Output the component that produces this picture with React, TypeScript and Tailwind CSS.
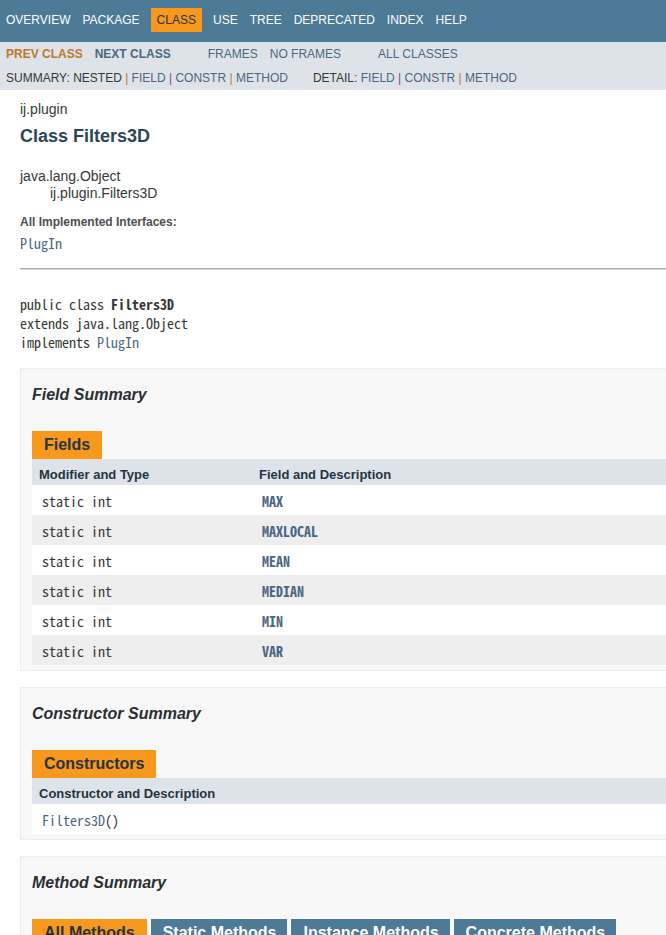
import React from "react";

const mono = "font-['Noto_Sans_Mono_CJK_KR','Liberation_Mono',monospace]";

function NavItem({ label, active }: { label: string; active?: boolean }) {
  return (
    <span
      className={
        active
          ? "px-[6px] py-[5px] mx-[5px] bg-[#F8981D] text-[#253441]"
          : "px-[6px] py-[5px]"
      }
    >
      {label}
    </span>
  );
}

function Tab({ label, active }: { label: string; active?: boolean }) {
  return (
    <div
      className={
        (active ? "bg-[#F8981D] text-[#253441] px-[12px]" : "bg-[#4D7A97] text-white pl-[12px] pr-[11px]") +
        " h-[28px] pt-[5px] text-[16px] leading-[18px] font-bold whitespace-nowrap"
      }
    >
      {label}
    </div>
  );
}

function BlockTitle({ children }: { children: React.ReactNode }) {
  return (
    <div className="h-[62px] pt-[16px] text-[16px] leading-[20px] font-bold italic text-[#2b2f33]">
      {children}
    </div>
  );
}

const fields = ["MAX", "MAXLOCAL", "MEAN", "MEDIAN", "MIN", "VAR"];

export default function App() {
  return (
    <div className="w-[666px] h-[935px] overflow-hidden bg-white text-[#353833] font-['Liberation_Sans',Arial,sans-serif]">
      {/* top nav */}
      <div className="bg-[#4D7A97] h-[42px] pt-[8px] flex items-start text-[12px] leading-[14px] text-white uppercase">
        <NavItem label="Overview" />
        <NavItem label="Package" />
        <NavItem label="Class" active />
        <NavItem label="Use" />
        <NavItem label="Tree" />
        <NavItem label="Deprecated" />
        <NavItem label="Index" />
        <NavItem label="Help" />
      </div>
      {/* sub nav */}
      <div className="bg-[#dee3e9] h-[48px] text-[12px] leading-[14px]">
        <div className="h-[23px] pt-[5px] flex uppercase">
          <span className="px-[6px] font-bold text-[#bb7a2a]">Prev Class</span>
          <span className="px-[6px] font-bold text-[#4A6782]">Next Class</span>
          <span className="ml-[25px] px-[6px] text-[#4A6782]">Frames</span>
          <span className="px-[6px] text-[#4A6782]">No Frames</span>
          <span className="ml-[25px] px-[6px] text-[#4A6782]">All Classes</span>
        </div>
        <div className="h-[25px] pt-[6px] flex whitespace-nowrap">
          <span className="px-[6px]">
            SUMMARY: NESTED <span className="text-[#bb7a2a]">|</span>{" "}
            <span className="text-[#4A6782]">FIELD</span>{" "}
            <span className="text-[#8a3f8a]">|</span>{" "}
            <span className="text-[#4A6782]">CONSTR</span>{" "}
            <span className="text-[#bb7a2a]">|</span>{" "}
            <span className="text-[#4A6782]">METHOD</span>
          </span>
          <span className="ml-[13px] px-[6px]">
            DETAIL: <span className="text-[#4A6782]">FIELD</span>{" "}
            <span className="text-[#8a3f8a]">|</span>{" "}
            <span className="text-[#4A6782]">CONSTR</span>{" "}
            <span className="text-[#bb7a2a]">|</span>{" "}
            <span className="text-[#4A6782]">METHOD</span>
          </span>
        </div>
      </div>

      {/* header */}
      <div className="pl-[20px]">
        <div className="mt-[10px] text-[14px] leading-[18px]">ij.plugin</div>
        <div className="mt-[7px] text-[18px] leading-[22px] font-bold text-[#2c4557]">Class Filters3D</div>
        <div className="mt-[21px] text-[14px] leading-[17px]">java.lang.Object</div>
        <div className="pl-[30px] text-[14px] leading-[17px]">ij.plugin.Filters3D</div>
        <div className="mt-[13px] text-[12px] leading-[15px] font-bold text-[#4E4E4E]">
          All Implemented Interfaces:
        </div>
        <div className={"mt-[5px] text-[14px] leading-[17px] text-[#4A6782] " + mono}>PlugIn</div>
        <div className="mt-[16px] h-[2px] bg-[#a8a8a8] border-b border-[#d8d8d8]" />

        <div className={"mt-[25px] text-[14px] leading-[19px] whitespace-pre " + mono}>
          <div>
            public class <span className="font-bold">Filters3D</span>
          </div>
          <div>extends java.lang.Object</div>
          <div>
            implements <span className="text-[#4A6782]">PlugIn</span>
          </div>
        </div>

        {/* field summary */}
        <div className="mt-[16px] w-[700px] bg-[#f8f8f8] border border-[#ededed] pl-[11px] pb-[5px]">
          <BlockTitle>Field Summary</BlockTitle>
          <div className="flex">
            <Tab label="Fields" active />
          </div>
          <div className="h-[26px] bg-[#dee3e9] flex text-[13px] leading-[15px] font-bold text-[#253441]">
            <div className="w-[220px] pl-[7px] pt-[8px]">Modifier and Type</div>
            <div className="pl-[7px] pt-[8px]">Field and Description</div>
          </div>
          {fields.map((f, i) => (
            <div
              key={f}
              className={
                (i % 2 === 0 ? "bg-white" : "bg-[#eeeeef]") +
                " h-[30px] flex text-[14px] leading-[16px] " +
                mono
              }
            >
              <div className="w-[220px] pl-[10px] pt-[8px]">static int</div>
              <div className="pl-[10px] pt-[8px] font-bold text-[#4A6782]">{f}</div>
            </div>
          ))}
        </div>

        {/* constructor summary */}
        <div className="mt-[16px] w-[700px] bg-[#f8f8f8] border border-[#ededed] pl-[11px] pb-[5px]">
          <BlockTitle>Constructor Summary</BlockTitle>
          <div className="flex">
            <Tab label="Constructors" active />
          </div>
          <div className="h-[26px] bg-[#dee3e9] flex text-[13px] leading-[15px] font-bold text-[#253441]">
            <div className="pl-[7px] pt-[8px]">Constructor and Description</div>
          </div>
          <div className={"bg-white h-[30px] flex text-[14px] leading-[16px] " + mono}>
            <div className="pl-[10px] pt-[8px]">
              <span className="text-[#4A6782]">Filters3D</span>()
            </div>
          </div>
        </div>

        {/* method summary */}
        <div className="mt-[16px] w-[700px] bg-[#f8f8f8] border border-[#ededed] pl-[11px] pb-[5px]">
          <BlockTitle>Method Summary</BlockTitle>
          <div className="flex gap-[4px]">
            <Tab label="All Methods" active />
            <Tab label="Static Methods" />
            <Tab label="Instance Methods" />
            <Tab label="Concrete Methods" />
          </div>
        </div>
      </div>
    </div>
  );
}
